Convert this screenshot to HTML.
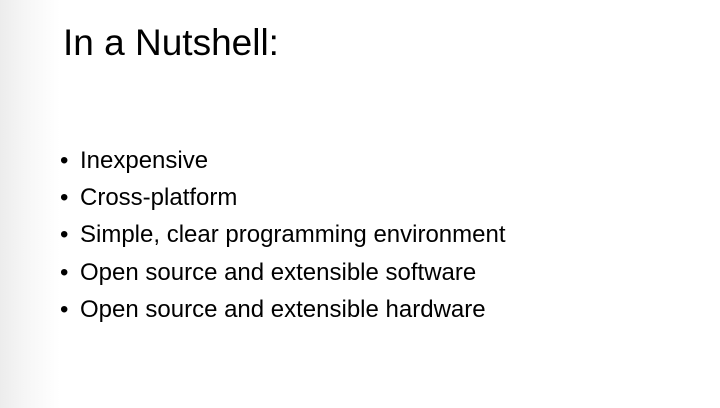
<!DOCTYPE html>
<html><head><style>
body{margin:0;width:720px;height:408px;overflow:hidden;background:linear-gradient(to right,#ececec 0px,#f6f6f6 25px,#fff 60px);font-family:"Liberation Sans",sans-serif;color:#000;position:relative}
h1{position:absolute;left:63px;top:19px;margin:0;font-weight:normal;font-size:37px;letter-spacing:0;line-height:48px}
ul{position:absolute;left:60px;top:142px;margin:0;padding:0;list-style:none;font-size:24px;line-height:37.2px}
li::before{content:"•";display:inline-block;width:20px}
</style></head><body>
<h1>In a Nutshell:</h1>
<ul>
<li>Inexpensive</li>
<li>Cross-platform</li>
<li>Simple, clear programming environment</li>
<li>Open source and extensible software</li>
<li>Open source and extensible hardware</li>
</ul>
</body></html>
